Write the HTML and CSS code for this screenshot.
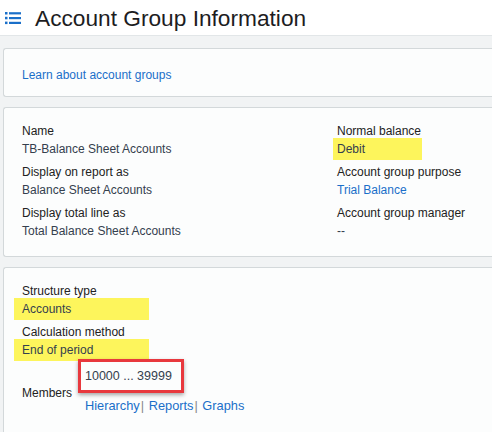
FILE: index.html
```
<!DOCTYPE html>
<html lang="en">
<head>
    <meta charset="UTF-8">
    <title>Account Group Information</title>
    <link rel="stylesheet" href="styles.css">
</head>
<body>

<div class="page-header">
    <svg class="list-icon" width="18" height="14" viewBox="0 0 18 14">
        <rect x="1" y="1" width="2.5" height="2.5" fill="#1a6fc9"/>
        <rect x="1" y="5.8" width="2.5" height="2.5" fill="#1a6fc9"/>
        <rect x="1" y="10.6" width="2.5" height="2.5" fill="#1a6fc9"/>
        <rect x="5" y="1.2" width="12" height="2.2" fill="#1a6fc9"/>
        <rect x="5" y="6" width="12" height="2.2" fill="#1a6fc9"/>
        <rect x="5" y="10.8" width="12" height="2.2" fill="#1a6fc9"/>
    </svg>
    <h1>Account Group Information</h1>
</div>

<div class="content">
    <div class="card card-help">
        <a href="#">Learn about account groups</a>
    </div>

    <div class="card card-details">
        <div class="column">
            <div class="field">
                <div class="label">Name</div>
                <div class="value">TB-Balance Sheet Accounts</div>
            </div>
            <div class="field">
                <div class="label">Display on report as</div>
                <div class="value">Balance Sheet Accounts</div>
            </div>
            <div class="field">
                <div class="label">Display total line as</div>
                <div class="value">Total Balance Sheet Accounts</div>
            </div>
        </div>
        <div class="column">
            <div class="field">
                <div class="label">Normal balance</div>
                <div class="value hl hl-small">Debit</div>
            </div>
            <div class="field">
                <div class="label">Account group purpose</div>
                <div class="value"><a href="#">Trial Balance</a></div>
            </div>
            <div class="field">
                <div class="label">Account group manager</div>
                <div class="value">--</div>
            </div>
        </div>
    </div>

    <div class="card card-structure">
        <div class="field">
            <div class="label">Structure type</div>
            <div class="value hl hl-wide">Accounts</div>
        </div>
        <div class="field">
            <div class="label">Calculation method</div>
            <div class="value hl hl-wide">End of period</div>
        </div>
        <div class="members">
            <div class="label members-label">Members</div>
            <div class="members-body">
                <div class="range">10000 ... 39999</div>
                <div class="member-links">
                    <a href="#">Hierarchy</a><span class="sep">|</span>
                    <a href="#">Reports</a><span class="sep">|</span>
                    <a href="#">Graphs</a>
                </div>
            </div>
        </div>
    </div>
</div>

</body>
</html>
```

FILE: styles.css
```
body {
    margin: 0;
    background: #f1f3f4;
    font-family: "Liberation Sans", Arial, sans-serif;
    font-size: 12px;
    color: #222;
    overflow: hidden;
}
a {
    color: #1a6fc9;
    text-decoration: none;
}
.page-header {
    height: 35px;
    background: #fff;
    border-bottom: 1px solid #e2e6e8;
    display: flex;
    align-items: center;
}
.list-icon {
    margin: 1px 0 0 4px;
}
.page-header h1 {
    margin: 0 0 0 13px;
    font-size: 22.7px;
    font-weight: normal;
    color: #1d1d1f;
    line-height: 26px;
}
.content {
    padding: 12px 0 0 3px;
}
.card {
    background: #fcfdfd;
    border: 1px solid #d3d8da;
    border-right: none;
    border-radius: 3px 0 0 3px;
    margin-bottom: 10px;
    padding-left: 18px;
    box-sizing: border-box;
}
.card-help {
    height: 49px;
    padding-top: 17px;
    line-height: 18px;
}
.card-details {
    height: 150px;
    padding-top: 14px;
    display: grid;
    grid-template-columns: 315px 1fr;
}
.card-structure {
    height: 165px;
    padding-top: 14px;
    margin-bottom: 0;
    border-bottom: none;
    border-radius: 3px 0 0 0;
}
.field {
    margin-bottom: 5px;
}
.label {
    line-height: 18px;
    color: #222;
}
.value {
    line-height: 18px;
    color: #34404e;
}
.hl {
    background: #fdf55c;
    padding: 2px 0 2px 4px;
    margin: -2px 0 -2px -4px;
}
.hl-small {
    width: 85px;
}
.hl-wide {
    padding-left: 8px;
    margin-left: -8px;
    width: 127px;
}
.members {
    display: flex;
    align-items: flex-end;
    margin-top: -7px;
}
.members-label {
    width: 63px;
    margin-bottom: 12px;
}
.range {
    display: inline-block;
    margin-left: -7px;
    padding: 6px 9px 6px 4px;
    border: 3px solid #e8383d;
    box-shadow: 0 2px 4px rgba(0, 0, 0, 0.35);
    font-size: 12.5px;
    line-height: 16px;
    color: #34404e;
    background: #fcfdfd;
}
.member-links {
    margin-top: 5px;
    font-size: 12.8px;
    line-height: 16px;
}
.sep {
    color: #888;
    margin: 0 1px 0 1px;
}
```
